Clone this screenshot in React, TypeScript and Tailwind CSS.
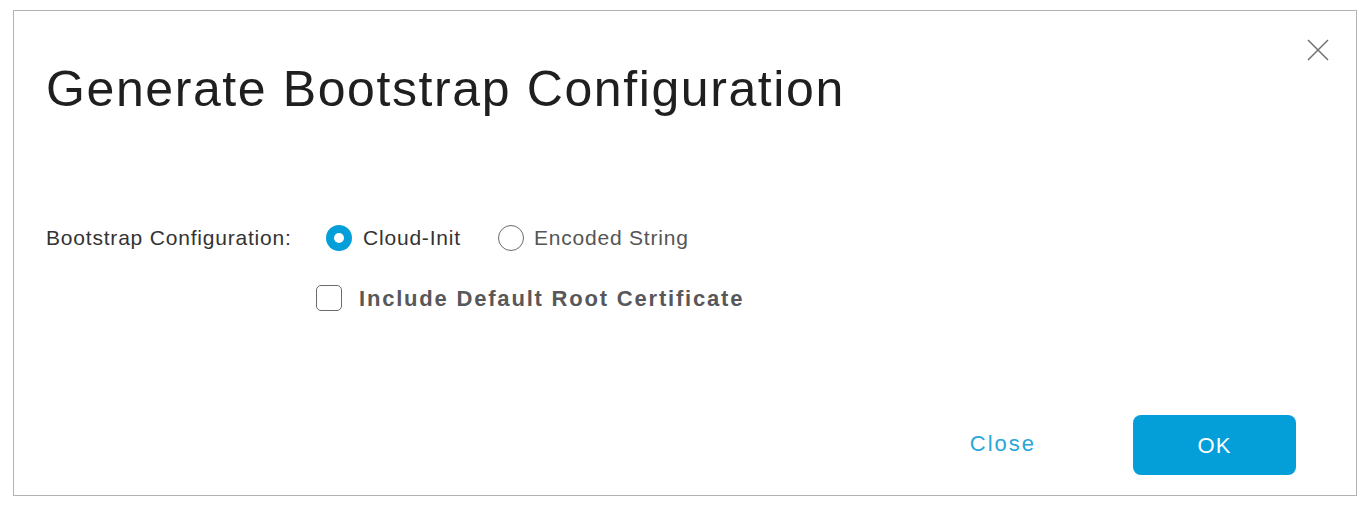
import React from "react";

export default function App() {
  const font = { fontFamily: '"Liberation Sans", Arial, sans-serif' };
  return (
    <div className="w-[1365px] h-[507px] bg-white pt-[10px] pl-[13px]" style={font}>
      <div className="relative w-[1344px] h-[486px] border border-[#b3b3b3] bg-white flex flex-col">
        <button className="absolute right-[26px] top-[27px] w-[24px] h-[24px] flex items-center justify-center">
          <svg width="24" height="24" viewBox="0 0 24 24">
            <path d="M2 2 L22 22 M22 2 L2 22" stroke="#707070" strokeWidth="1.5" fill="none" />
          </svg>
        </button>
        <h1 className="pl-[32px] pt-[49px] text-[50px] leading-[58px] font-normal text-[#1f1f1f] tracking-[1.6px]">
          Generate Bootstrap Configuration
        </h1>
        <div className="pl-[32px] mt-[106px] flex items-center h-[28px]">
          <span className="text-[21px] text-[#333333] tracking-[0.8px] w-[280px]">Bootstrap Configuration:</span>
          <label className="flex items-center">
            <span className="w-[26px] h-[26px] rounded-full bg-[#049fd9] flex items-center justify-center">
              <span className="w-[10px] h-[10px] rounded-full bg-white" />
            </span>
            <span className="ml-[11px] text-[21px] tracking-[0.8px] text-[#333333]">Cloud-Init</span>
          </label>
          <label className="flex items-center ml-[37px]">
            <span className="w-[26px] h-[26px] rounded-full border-[1.5px] border-[#6b6b6b] bg-white" />
            <span className="ml-[10px] text-[21px] tracking-[0.8px] text-[#555555]">Encoded String</span>
          </label>
        </div>
        <div className="pl-[302px] mt-[32px] flex items-center h-[28px]">
          <span className="w-[26px] h-[26px] rounded-[5px] border-[1.5px] border-[#6b6b6b] bg-white" />
          <span className="ml-[17px] text-[22px] font-bold tracking-[1.8px] text-[#58585b]">Include Default Root Certificate</span>
        </div>
        <div className="mt-auto mb-[20px] pr-[60px] flex items-center justify-end">
          <button className="text-[22px] tracking-[2px] text-[#2aa7da] mr-[97px] mb-[3px]">Close</button>
          <button className="w-[163px] h-[60px] rounded-[8px] bg-[#049fd9] text-white text-[22px] tracking-[1px]">OK</button>
        </div>
      </div>
    </div>
  );
}
